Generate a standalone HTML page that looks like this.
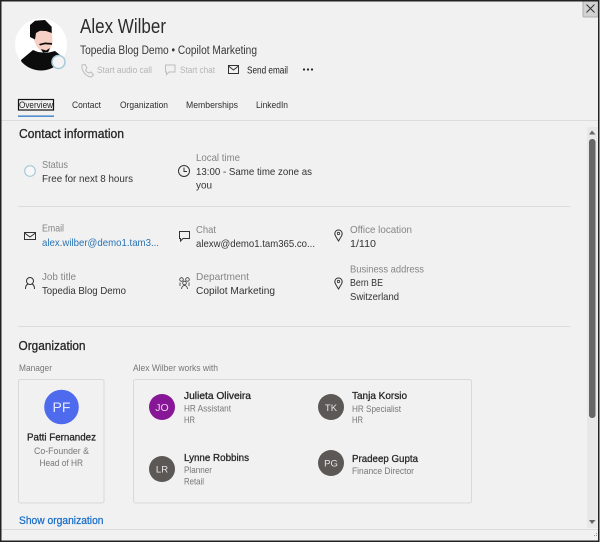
<!DOCTYPE html>
<html lang="en"><head><meta charset="utf-8"><title>Alex Wilber</title>
<style>
html,body{margin:0;padding:0;width:600px;height:543px;overflow:hidden;background:#f1f1f1}
svg{display:block;filter:blur(.3px)}
text{font-family:"Liberation Sans",sans-serif;font-size:10.500px;fill:#333}
.l{fill:#858585}.d{fill:#b5b5b5;font-size:9.500px}.t{fill:#2e2e2e;font-size:9.500px}.s{fill:#777;font-size:9.500px}
.b{fill:#262626;stroke:#262626;stroke-width:.3}
.i{fill:none;stroke:#333;stroke-width:1}
</style></head><body>
<svg width="600" height="543" viewBox="0 0 600 543" xmlns="http://www.w3.org/2000/svg">
<rect width="600" height="543" fill="#f1f1f1"/>
<defs><clipPath id="av"><circle cx="41" cy="44.500" r="26"/></clipPath></defs>
<circle cx="41" cy="44.500" r="26" fill="#fff"/>
<g clip-path="url(#av)">
<path d="M21 60 L33 50 L38 52 L47 53 L55 51 L60 55 L66 66 L60 74 H24Z" fill="#0c0c0c"/>
<path d="M35 30 H52 L52.500 44 L49 51 L42 52 L37 47 L34 40Z" fill="#f6d0c4"/>
<path d="M30 37 L30 25 L35 20.700 L45 20 L51.700 26.700 L51.700 33 L46 31 L40 30.700 L36 33 L35 39.500Z" fill="#0c0c0c"/>
<path d="M39 44 L45 42.500 L52 43 L52 44.800 L45 44.300 L40 45.500Z M41 49 L46 50.500 L50 48 L48 52.500 L43 52.500Z" fill="#0c0c0c"/>
</g>
<circle cx="58.500" cy="62" r="6.500" fill="#f4f4f4" stroke="#a6c9d8" stroke-width="1.500"/>

<text x="80" y="33" textLength="86" lengthAdjust="spacingAndGlyphs" style="font-size:20px;fill:#2c2c2c">Alex Wilber</text>
<text x="80" y="54" textLength="177" lengthAdjust="spacingAndGlyphs" style="font-size:11.500px;fill:#383838">Topedia Blog Demo • Copilot Marketing</text>

<path d="M82 65 L85 64.500 L87 68 L85.500 70 Q87 72.500 89 73 L91 72 L93.500 75 L91 77 Q86 76.500 83 71 Q81.500 68 82 65Z" fill="none" stroke="#bdbdbd"/>
<text class="d" x="97" y="73" textLength="55" lengthAdjust="spacingAndGlyphs">Start audio call</text>
<path d="M165.500 65 H175 V72 H169 L166.500 74.500 V72 H165.500Z" fill="none" stroke="#bdbdbd"/>
<text class="d" x="180" y="73" textLength="35" lengthAdjust="spacingAndGlyphs">Start chat</text>
<path class="i" d="M228.500 65.500 H238.500 V73.500 H228.500Z M228.500 66 L233.500 70 L238.500 66"/>
<text x="247" y="73.500" textLength="41" lengthAdjust="spacingAndGlyphs" style="font-size:10px;fill:#222">Send email</text>
<circle cx="304" cy="69.500" r="1.100" fill="#222"/><circle cx="308" cy="69.500" r="1.100" fill="#222"/><circle cx="312" cy="69.500" r="1.100" fill="#222"/>

<text x="19" y="108" textLength="34" lengthAdjust="spacingAndGlyphs" style="font-size:9.500px;fill:#222">Overview</text>
<rect x="18.500" y="99.500" width="35" height="10.500" fill="none" stroke="#111" stroke-width="1.200"/>
<rect x="18" y="115.500" width="36" height="1.300" fill="#2a78c4"/>
<text class="t" x="72" y="108" textLength="29" lengthAdjust="spacingAndGlyphs">Contact</text>
<text class="t" x="120" y="108" textLength="48" lengthAdjust="spacingAndGlyphs">Organization</text>
<text class="t" x="186" y="108" textLength="52" lengthAdjust="spacingAndGlyphs">Memberships</text>
<text class="t" x="256" y="108" textLength="32" lengthAdjust="spacingAndGlyphs">LinkedIn</text>
<rect x="1" y="120" width="597" height="1" fill="#dcdcdc"/>

<text class="b" x="19" y="138" textLength="105" lengthAdjust="spacingAndGlyphs" style="font-size:12.500px">Contact information</text>
<circle cx="30" cy="171" r="5.300" fill="#f8f8f8" stroke="#a6c9d8" stroke-width="1.200"/>
<text class="l" x="42" y="168" textLength="26" lengthAdjust="spacingAndGlyphs">Status</text>
<text x="42" y="182" textLength="91" lengthAdjust="spacingAndGlyphs">Free for next 8 hours</text>
<circle class="i" cx="184" cy="171" r="5.500"/><path class="i" d="M184 167.500 V171.500 H187"/>
<text class="l" x="196" y="161" textLength="44" lengthAdjust="spacingAndGlyphs">Local time</text>
<text x="196" y="175" textLength="116" lengthAdjust="spacingAndGlyphs">13:00 - Same time zone as</text>
<text x="196" y="188.500" textLength="16" lengthAdjust="spacingAndGlyphs">you</text>
<rect x="18" y="206" width="552" height="1" fill="#dcdcdc"/>

<path class="i" d="M24.500 232.500 H35.500 V239.500 H24.500Z M24.500 233 L30 237 L35.500 233"/>
<text class="l" x="42" y="231.500" textLength="22" lengthAdjust="spacingAndGlyphs">Email</text>
<text x="42" y="246" textLength="117" lengthAdjust="spacingAndGlyphs" style="fill:#2a73b5">alex.wilber@demo1.tam3...</text>
<path class="i" d="M179.500 231.500 H189.500 V238.500 H183 L180.500 241 V238.500 H179.500Z"/>
<text class="l" x="196" y="233" textLength="20" lengthAdjust="spacingAndGlyphs">Chat</text>
<text x="196" y="247" textLength="119" lengthAdjust="spacingAndGlyphs">alexw@demo1.tam365.co...</text>
<path class="i" d="M338.500 241 L335.500 236 Q334.500 234 335 232.500 Q336 230 338.500 230 Q341 230 342 232.500 Q342.500 234 341.500 236Z"/><circle cx="338.500" cy="233.500" r="1.200" fill="none" stroke="#333" stroke-width=".8"/>
<text class="l" x="350" y="233" textLength="62" lengthAdjust="spacingAndGlyphs">Office location</text>
<text x="350" y="247" textLength="26" lengthAdjust="spacingAndGlyphs">1/110</text>

<circle class="i" cx="30" cy="281" r="3.500"/><path class="i" d="M25.500 289 Q25.500 285 28 284 M34.500 289 Q34.500 285 32 284"/>
<text class="l" x="42" y="280" textLength="34" lengthAdjust="spacingAndGlyphs">Job title</text>
<text x="42" y="294" textLength="84" lengthAdjust="spacingAndGlyphs">Topedia Blog Demo</text>
<circle cx="181.500" cy="279.500" r="1.800" fill="none" stroke="#333" stroke-width=".8"/><circle cx="187.500" cy="279.500" r="1.800" fill="none" stroke="#333" stroke-width=".8"/><circle cx="184.500" cy="283" r="1.800" fill="none" stroke="#333" stroke-width=".8"/>
<path d="M180 286 V282.500 M189 286 V282.500 M181.500 289 Q182 285.500 184.500 285.500 Q187 285.500 187.500 289" fill="none" stroke="#333" stroke-width=".8"/>
<text class="l" x="196" y="280" textLength="53" lengthAdjust="spacingAndGlyphs">Department</text>
<text x="196" y="294" textLength="79" lengthAdjust="spacingAndGlyphs">Copilot Marketing</text>
<path class="i" d="M338.500 289 L335.500 284 Q334.500 282 335 280.500 Q336 278 338.500 278 Q341 278 342 280.500 Q342.500 282 341.500 284Z"/><circle cx="338.500" cy="281.500" r="1.200" fill="none" stroke="#333" stroke-width=".8"/>
<text class="l" x="350" y="272.500" textLength="74" lengthAdjust="spacingAndGlyphs">Business address</text>
<text x="350" y="286" textLength="33" lengthAdjust="spacingAndGlyphs">Bern BE</text>
<text x="350" y="300" textLength="49" lengthAdjust="spacingAndGlyphs">Switzerland</text>
<rect x="18" y="326" width="552" height="1" fill="#dcdcdc"/>

<text class="b" x="18.500" y="350" textLength="67" lengthAdjust="spacingAndGlyphs" style="font-size:12.500px">Organization</text>
<text class="s" x="19" y="371" textLength="33" lengthAdjust="spacingAndGlyphs">Manager</text>
<text class="s" x="133" y="371" textLength="85" lengthAdjust="spacingAndGlyphs">Alex Wilber works with</text>

<rect x="18.500" y="379.500" width="85.500" height="123.500" rx="2" fill="#f1f1f1" stroke="#d9d9d9"/>
<rect x="133.500" y="379.500" width="338" height="123.500" rx="2" fill="#f1f1f1" stroke="#d9d9d9"/>

<circle cx="61.500" cy="407" r="17.300" fill="#4f6bed"/>
<text x="61.500" y="412" text-anchor="middle" style="font-size:14px;fill:#e6eaff">PF</text>
<text class="b" x="27" y="440.500" textLength="69" lengthAdjust="spacingAndGlyphs">Patti Fernandez</text>
<text class="s" x="34" y="454" textLength="55" lengthAdjust="spacingAndGlyphs">Co-Founder &amp;</text>
<text class="s" x="39.500" y="466" textLength="43.500" lengthAdjust="spacingAndGlyphs">Head of HR</text>

<circle cx="162" cy="407" r="13" fill="#881798"/>
<text x="162" y="411" text-anchor="middle" style="font-size:10.500px;fill:#e8d5ea">JO</text>
<text class="b" x="184" y="399" textLength="67" lengthAdjust="spacingAndGlyphs">Julieta Oliveira</text>
<text class="s" x="184" y="411.500" textLength="47" lengthAdjust="spacingAndGlyphs">HR Assistant</text>
<text class="s" x="184" y="423" textLength="11" lengthAdjust="spacingAndGlyphs">HR</text>

<circle cx="162" cy="469" r="13" fill="#5b5855"/>
<text x="162" y="472.500" text-anchor="middle" style="font-size:9.500px;fill:#e8e8e8">LR</text>
<text class="b" x="184" y="461" textLength="65" lengthAdjust="spacingAndGlyphs">Lynne Robbins</text>
<text class="s" x="184" y="473" textLength="28" lengthAdjust="spacingAndGlyphs">Planner</text>
<text class="s" x="184" y="484.500" textLength="20" lengthAdjust="spacingAndGlyphs">Retail</text>

<circle cx="331" cy="407" r="13" fill="#5b5855"/>
<text x="331" y="411" text-anchor="middle" style="font-size:9.500px;fill:#e8e8e8">TK</text>
<text class="b" x="352" y="399" textLength="55" lengthAdjust="spacingAndGlyphs">Tanja Korsio</text>
<text class="s" x="352" y="412" textLength="49" lengthAdjust="spacingAndGlyphs">HR Specialist</text>
<text class="s" x="352" y="423" textLength="11" lengthAdjust="spacingAndGlyphs">HR</text>

<circle cx="331" cy="463" r="13" fill="#5b5855"/>
<text x="331" y="466.500" text-anchor="middle" style="font-size:9.500px;fill:#e8e8e8">PG</text>
<text class="b" x="352" y="462" textLength="66" lengthAdjust="spacingAndGlyphs">Pradeep Gupta</text>
<text class="s" x="352" y="474" textLength="62" lengthAdjust="spacingAndGlyphs">Finance Director</text>

<text x="19" y="524" textLength="84.500" lengthAdjust="spacingAndGlyphs" style="font-size:11px;fill:#1a6ec8;stroke:#1a6ec8;stroke-width:.25">Show organization</text>

<rect x="587" y="127" width="10.500" height="401" fill="#e8e8e8"/>
<rect x="589" y="139" width="6.500" height="279" rx="3" fill="#666"/>
<path d="M589 134.500 L592 130.500 L595.500 134.500Z" fill="#666"/>
<path d="M589 520 H595.500 L592 524Z" fill="#666"/>

<rect x="1" y="529" width="597" height="1" fill="#dcdcdc"/>
<g fill="#9a9a9a"><rect x="596" y="533" width="1" height="1"/><rect x="594" y="535" width="1" height="1"/><rect x="596" y="535" width="1" height="1"/></g>

<rect x="583" y="1" width="15" height="16" rx="1" fill="#d2d2d2" stroke="#aeaeae"/>
<path d="M586.500 4.500 L594.500 12.500 M594.500 4.500 L586.500 12.500" stroke="#333" stroke-width="1" fill="none"/>

<rect x="0" y="0" width="600" height="1.500" fill="#222"/>
<rect x="0" y="0" width="1.500" height="543" fill="#222"/>
<rect x="598" y="0" width="1.500" height="543" fill="#222"/>
<rect x="0" y="540.500" width="600" height="1.500" fill="#222"/>
<rect x="0" y="542" width="600" height="1" fill="#fff"/>
<rect x="599.500" y="0" width=".5" height="543" fill="#fff"/>
</svg>
</body></html>
